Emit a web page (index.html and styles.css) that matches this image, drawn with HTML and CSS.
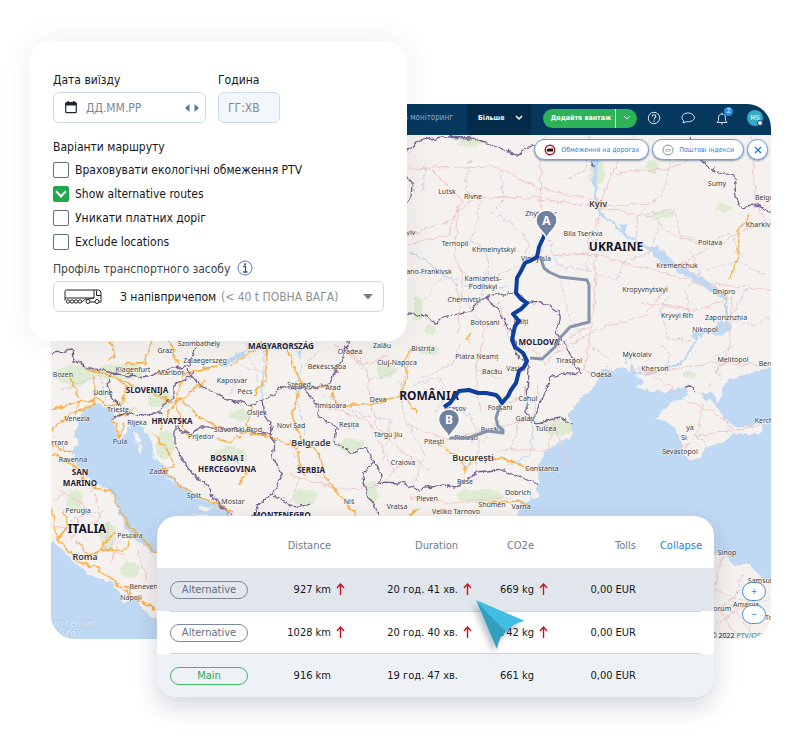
FILE: index.html
```html
<!DOCTYPE html>
<html lang="uk">
	<head>
		<meta charset="utf-8">
		<meta name="viewport" content="width=device-width, initial-scale=1">
		<title>Маршрут</title>
		<link rel="stylesheet" href="styles.css">
	</head>
	<body>
		<main class="stage">

			<section class="map-panel">
				<header class="topbar">
					<a class="nav-link" href="#">GPS моніторинг</a>
					<button class="nav-more" type="button">Більше
						<svg width="8" height="6" viewBox="0 0 8 6"><path d="M1 1l3 3 3-3" fill="none" stroke="#fff" stroke-width="1.5"/></svg>
					</button>
					<div class="add-group">
						<button class="add-main" type="button">Додайте вантаж</button>
						<button class="add-more" type="button" aria-label="Ще">
							<svg width="8" height="6" viewBox="0 0 8 6"><path d="M1 1l3 3 3-3" fill="none" stroke="#fff"/></svg>
						</button>
					</div>
					<button class="icon-btn" type="button" aria-label="Довідка">
						<svg width="14" height="14" viewBox="0 0 14 14" fill="none" stroke="#d5e3ee"><circle cx="7" cy="7" r="5.7"/><path d="M5.2 5.5c0-2.4 3.7-2.2 3.6 0C8.8 6.9 7 6.8 7 8.5M7 9.6v1.2" stroke-width="1.1"/></svg>
					</button>
					<button class="icon-btn" type="button" aria-label="Чат">
						<svg width="14" height="14" viewBox="0 0 14 14" fill="none" stroke="#d5e3ee"><path d="M2.800 9.800C-1 7 1.500 2 7 2s8.500 5 4.500 7.500C10 10.600 7.500 11 5.600 10.700L2 12z"/></svg>
					</button>
					<button class="icon-btn bell" type="button" aria-label="Сповіщення">
						<svg width="14" height="14" viewBox="0 0 14 14" fill="none" stroke="#d5e3ee"><path d="M2 11.500h10L10.500 9.500V6.500c0-4.600-7-4.600-7 0v3zM6 12.500c.5.8 1.500.8 2 0M7 3V1.500"/></svg>
						<span class="count">2</span>
					</button>
					<button class="avatar" type="button">MS<span class="status"></span></button>
				</header>

				<div class="map">
					<svg class="map-art" viewBox="51 135 720 504" preserveAspectRatio="xMidYMid slice">
						<defs>
							<filter id="rough" filterUnits="userSpaceOnUse" x="40" y="125" width="745" height="525" color-interpolation-filters="sRGB">
								<feTurbulence type="fractalNoise" baseFrequency="0.13" numOctaves="3" seed="4"/>
								<feDisplacementMap in="SourceGraphic" scale="7" xChannelSelector="R" yChannelSelector="G"/>
							</filter>
						</defs>
						<rect x="51" y="135" width="720" height="504" fill="#f5f1ee"/>

						<!-- forests -->
						<g class="green" filter="url(#rough)">
							<ellipse cx="597" cy="172" rx="8" ry="12"/>
							<ellipse cx="418" cy="308" rx="5" ry="12"/>
							<ellipse cx="430" cy="330" rx="6" ry="5"/>
							<ellipse cx="690" cy="375" rx="6" ry="3"/>
							<ellipse cx="663" cy="215" rx="12" ry="3"/>
							<ellipse cx="724" cy="208" rx="8" ry="4"/>
							<ellipse cx="652" cy="166" rx="6" ry="6"/>
							<ellipse cx="558" cy="428" rx="14" ry="8"/>
							<ellipse cx="480" cy="496" rx="24" ry="7"/>
							<ellipse cx="386" cy="370" rx="10" ry="8"/>
							<ellipse cx="350" cy="445" rx="14" ry="7"/>
							<ellipse cx="372" cy="492" rx="6" ry="12"/>
							<ellipse cx="165" cy="445" rx="9" ry="15"/>
							<ellipse cx="240" cy="415" rx="11" ry="5"/>
							<ellipse cx="230" cy="455" rx="16" ry="9"/>
							<ellipse cx="305" cy="497" rx="12" ry="8"/>
							<ellipse cx="120" cy="372" rx="26" ry="8"/>
							<ellipse cx="75" cy="375" rx="20" ry="10"/>
							<ellipse cx="160" cy="400" rx="12" ry="8"/>
							<ellipse cx="108" cy="535" rx="8" ry="14"/>
							<ellipse cx="75" cy="500" rx="8" ry="10"/>
							<ellipse cx="130" cy="570" rx="10" ry="8"/>
							<ellipse cx="470" cy="142" rx="14" ry="5"/>
							<ellipse cx="430" cy="350" rx="10" ry="5"/>
						</g>

						<!-- seas, lakes and rivers -->
						<g class="sea" filter="url(#rough)">
							<path d="M100 403L84 410 80 416 75 430 78 445 73 451 77 465 87 477 107 489 116 501 121 517 131 537 157 555 170 600 300 600 230 515 213 503 200 497 183 488 172 478 163 467 155 456 150 440 143 429 135 421 130 425 127 435 120 439 115 428 113 418 113 411z"/>
							<path d="M40 536L52 540 63 550 77 565 93 577 110 582 120 590 122 602 137 600 143 610 150 617 160 624 170 660H40z"/>
							<path d="M515 525L518 510 522 502 537 497 539 485 538 468 547 448 560 443 570 438 572 423 567 415 573 407 583 395 590 393 597 379 603 369 613 370 623 367 629 374 632 362 637 372 645 373 634 375 645 380 637 387 650 392 670 391 685 388 688 395 673 402 653 418 667 423 677 431 682 442 680 451 690 460 700 458 707 447 723 442 733 433 750 436 762 432 764 423 785 424V590L771 583 758 575 750 565 733 565 723 553 714 557 690 580H515z"/>
							<path d="M785 363L753 372 737 378 728 380 723 389 720 402 714 398 712 390 708 396 698 392 703 400 712 400 720 409 723 419 737 426 750 426 760 419 785 420z"/>
						</g>
						<g class="island" filter="url(#rough)">
							<path d="M133 431l5 3 3 8-4 1zM138 444l4 3 1 8-3-2zM150 450l7 9-2 1zM163 475l12 8-3 1zM196 506l18 2-8 3zM188 515l20-1-4 3z"/>
						</g>
						<g class="sea" filter="url(#rough)">
							<path d="M643 244L654 248 659 244 663 252 672 260 684 267 713 285 727 296 722 298 704 287 680 272 662 263z"/>
							<path d="M592 150l6 2-1 40-4-2zM620 223l6 1v11l-4 1zM692 332l12 1 15-9 8-6 5 10-9 8-14-3-16 7z"/>
							<path d="M220 364l20-12 7-2-5 7-21 10z"/>
						</g>
						<g class="river" filter="url(#rough)">
							<path stroke-width="2" d="M595 190l3 22 15 10 10 12 22 14M713 288l12 9 3 25M697 338l-6 12-10 13-18 6-18 5"/>
							<path d="M407 250l15 8 20 17 25 10 40 2M298 341l4 30-6 15 8 50M265 341l-4 60M625 365l6-14M539 385l-6 30-2 40-25 10"/>
						</g>

						<!-- regional boundaries -->
						<g class="region" filter="url(#rough)">
							<path d="M470 160l-5 30 15 10-3 20-7 22 15 6 5 28-10 22M500 165l4 35-12 12 20 12 18 20-10 25M425 300l12-18 15-5 8 22M425 162l-3 30M547 235l10 30 30 6M590 135l-5 35-20 10M600 215l-12 25-2 30 30 10 10-20 25-8 8-35M670 162l-6 30-25 22-4 25 20 16M640 215l35-5 5 25 30 8 20-10 12 25M690 250l10 25-15 16 5 20M705 270l30-8 30 12M745 290l-15 30 25 5 15-8M670 295l-10 15 8 28 22 3M660 345l10 10-5 20M560 280l10 40 20 25 20 15M735 345l-20 12 5 22M460 345l-8 20-30 12M480 350l-3 20 25 10 15-12M412 385l28-8 5 20-10 15M440 400l30 15 10 25-5 25M500 420l-20 25M520 420l-10 30M400 380l5 40 20 35-10 25M350 350l20 30 25-8M322 395l40 20 30 5-10 40M290 440l10 30 30 10M300 480l-15 35M230 360l35 15M240 375l-10 20M245 342l15 40M320 350l-20 20M60 390l40-15 5 25M52 435l20 20 5 30-25 15M70 520l35-10M110 545l20-20M715 590l25 10 30 0M742 575l-10 30 20 30"/>
						</g>

						<!-- main roads -->
						<g class="road" filter="url(#rough)">
							<path d="M407 169l85-3 50 23 60 12M407 235l40-13 28-25 57 1 70 9 47-4M545 135l-5 30 2 80-5 10-38 20M599 204l18-40 20-35M615 174l55-6 20-8M602 209l50 8 20 18 30 8M407 245l40-10 15-35-30-30M459 205l-4 50 8 20-5 60M537 257l50-4 60 15 50 15 74 6M680 265l25-15 35-18 25-10M770 230l-15-30-3-65M732 290l-3 60-20 35M640 302l60 8 30-12M667 285l-20 30-47 13-45 25M601 205l-5 35-2 65-10 65 13 5 12-12M590 325l-30 20-15 20-10-15-25-8-10-40M480 410l-5-40 10-40-20-30M407 425l40 15 53-15 35-5 20 10 15 40M500 407l25-12 5-32M555 420l-8 30-50 0M510 497l-60 6-40-5M630 367l20 5 60-9 60 2M642 370l27 15 12 13 33 15 22 17 35-9M704 403l-8 33 40-6M696 436l-12 12-3-5M696 436l12 12M350 350l15 15 10 60 25 25 30 20M335 345l30 20 25-10M322 405l45 15 30 55M400 465l-20 20-35 5-55-15M412 350l-10 35 7 20M60 490l25 15-10 25-23-5M90 485l10 30-18 20M70 540l10-22M110 520l-5 30 20 5M120 540l-10 25M137 550l10 30M723 555l-8 30M740 590l-20 20 15 25M758 590l-10 40M715 625l50-35"/>
						</g>
						<g class="motorway" filter="url(#rough)">
							<path d="M52 410l28-8 20-3 10 7 12-2 4-18-15-10M52 430l20-18 23-7 0-30M75 415l5-15-10-25M52 446l21 6M52 454l22 10 16 22 22 6 15 30 30 32M52 510l5 28 20 24 20 5 35 30 25 12M58 540l10-15-5-15M75 540l15 15 10-5 15-18M103 548l20 3 10-18M125 585l10 15 15 4M112 415l8 22 5-15M115 410l10 6 10-8M150 342l-5 20-20 2M170 342l5 15 8 18-8 28-35-15-30-12-25-8M110 341l5 15-7 5M183 375l20-5 18-5M155 435l15 20 5 10-13 5 25 20 45 22M160 430l10-20 10-12 20 20 30 13 38 5 30 12M205 380l-30 25 12 30M230 366l30-20 5-15M268 345l-3 35-12 16M252 405l-5 20 8 8M284 342l8 20 9 22-9 30 10 28 16 10 7 25 12 15 15 18 10 10M298 451l2 15 5 10M301 387h30l5 18 22 0 40-8 10-20-5-18 10-10M240 435l-12 8-10-5M240 485l5-15-10-8M407 400l10 12M435 443l25 15 5 14 5-10M470 459h30l20 5 12 6M410 515l8-6M488 503l30-2 15 5M730 278l7-15 2-18-1-15 13-14M470 342l-5-4 8-4"/>
						</g>

						<!-- state borders -->
						<g class="border" filter="url(#rough)">
							<path d="M407 152l13-12 23-3 27 1 17 4 13 8 17 5 16-10 20-3M603 137l-8 13-5 12 5 4M690 137l12 23 8 8 23 7 2 22 8 11 14-3 14 8M407 177l6 6-1 14-5 8"/>
							<path d="M407 313l15 2 15 8 6-6 27-5 7-10 10-5 28-5 12 10 16 1 17 10-3 20 10 15 13 27-17-2-13 4-7 21-10 20 4 6 23-6 12 7M487 297l13 16 12 20 4 20 12 12-1 47 6 11"/>
							<path d="M378 482l22 1 20 6 23-4 12 2 22-14 26-3 17 7 19 8M303 388l14 17 3 12 17 10-2 16 18 10 14-5 5 10 10 17-4 7M375 462l-10 8-2 10 4 15 13 20M352 335l-4 7-8 20-10 20-15 6-15-1-17 1-20 12-13 5-30-8-23-15-12-13"/>
							<path d="M263 400l2 15 8 12-3 8 5 7-2 16 10 17-10 17-16 13-4 12M273 495l22 12 15-3M270 435l-17-3-36-5-17 0-8 8-17-8v18l12 23 20 17 10 17 13 13M52 353l20-3 1 10 17 8 23 5 27 5 33-10 15-2 7-18M113 373l-6 12 6 13 7 9M113 417l17-4 10 3 12-3 10 0 1-10 10-6v-12l24-12M685 387l6-1 6 5"/>
						</g>

						<g class="label">
							<text x="447" y="194">Lutsk</text><text x="473" y="199">Rivne</text>
							<text x="541" y="216">Zhytomyr</text><text x="409" y="235">Lviv</text>
							<text x="455" y="246">Ternopil</text><text x="494" y="252">Khmelnytskyi</text>
							<text x="583" y="236">Bila Tserkva</text><text x="536" y="261">Vinnytsia</text>
							<text x="426" y="274">Ivano-Frankivsk</text><text x="483" y="281">Kamianets-</text>
							<text x="483" y="289">Podilskyi</text><text x="464" y="302">Chernivtsi</text>
							<text x="485" y="325">Botoșani</text><text x="521" y="324">Bălți</text>
							<text x="423" y="351">Bistrița</text><text x="477" y="359">Piatra Neamț</text>
							<text x="492" y="374">Bacău</text><text x="516" y="371">Vaslui</text>
							<text x="569" y="363">Tiraspol</text><text x="528" y="401">Cahul</text>
							<text x="500" y="410">Focșani</text><text x="525" y="421">Galați</text>
							<text x="546" y="431">Tulcea</text><text x="491" y="432">Buzău</text>
							<text x="466" y="440">Ploiești</text><text x="434" y="444">Pitești</text>
							<text x="455" y="411">Brașov</text><text x="542" y="471">Constanța</text>
							<text x="465" y="484">Ruse</text><text x="518" y="495">Dobrich</text>
							<text x="427" y="501">Pleven</text><text x="492" y="507">Shumen</text>
							<text x="521" y="509">Varna</text><text x="456" y="514">Veliko Tarnovo</text>
							<text x="397" y="509">Vratsa</text><text x="717" y="186">Sumy</text>
							<text x="770" y="200">Belgorod</text><text x="758" y="227">Kharkiv</text>
							<text x="710" y="245">Poltava</text><text x="677" y="268">Kremenchuk</text>
							<text x="645" y="292">Kropyvnytskyi</text><text x="724" y="294">Dnipro</text>
							<text x="677" y="318">Kryvyi Rih</text><text x="726" y="320">Zaporizhzhia</text>
							<text x="705" y="332">Nikopol</text><text x="637" y="357">Mykolaiv</text>
							<text x="655" y="371">Kherson</text><text x="601" y="377">Odesa</text>
							<text x="733" y="362">Melitopol</text><text x="775" y="366">Berdiansk</text>
							<text x="764" y="423">Kerch</text><text x="690" y="430">ya</text>
							<text x="684" y="440">Si</text><text x="680" y="454">Sevastopol</text>
							<text x="350" y="354">Oradea</text><text x="382" y="348">Zalău</text>
							<text x="397" y="365">Cluj-Napoca</text><text x="327" y="369">Békéscsaba</text>
							<text x="299" y="387">Szeged</text><text x="333" y="390">Arad</text>
							<text x="378" y="402">Deva</text><text x="330" y="408">Timișoara</text>
							<text x="349" y="427">Reșița</text><text x="388" y="437">Târgu Jiu</text>
							<text x="403" y="465">Craiova</text><text x="291" y="428">Novi Sad</text>
							<text x="232" y="383">Kaposvár</text><text x="245" y="394">Pécs</text>
							<text x="257" y="415">Osijek</text><text x="238" y="432">Slavonski Brod</text>
							<text x="233" y="504">Mostar</text><text x="349" y="504">Niš</text>
							<text x="165" y="353">Graz</text><text x="199" y="346">Szombathely</text>
							<text x="205" y="363">Zalaegerszeg</text><text x="133" y="372">Klagenfurt</text>
							<text x="171" y="375">Maribor</text><text x="63" y="377">Bozen</text>
							<text x="103" y="395">Udine</text><text x="118" y="412">Trieste</text>
							<text x="77" y="421">Venezia</text><text x="137" y="425">Rijeka</text>
							<text x="120" y="444">Pula</text><text x="56" y="445">Ferrara</text>
							<text x="73" y="462">Ravenna</text><text x="159" y="474">Zadar</text>
							<text x="194" y="498">Split</text><text x="201" y="439">Prijedor</text>
							<text x="78" y="513">Perugia</text><text x="130" y="538">Pescara</text>
							<text x="147" y="589">Benevento</text><text x="131" y="600">Napoli</text>
							<text x="727" y="555">Sinop</text><text x="761" y="583">Samsun</text>
							<text x="746" y="607">Amasya</text><text x="720" y="611">Çorum</text>
							<text x="774" y="620">Tokat</text>
						</g>
						<g class="label capital">
							<text x="598" y="207">Kyiv</text><text x="473" y="461">București</text>
							<text x="311" y="446">Belgrade</text><text x="85" y="560">Roma</text>
						</g>
						<g class="label country">
							<text x="539" y="345">MOLDOVA</text><text x="281" y="349">MAGYARORSZÁG</text>
							<text x="147" y="393">SLOVENIJA</text><text x="172" y="424">HRVATSKA</text>
							<text x="227" y="461">BOSNA I</text><text x="227" y="472">HERCEGOVINA</text>
							<text x="311" y="473">SERBIA</text><text x="282" y="518">MONTENEGRO</text>
							<text x="80" y="475">SAN</text><text x="80" y="486">MARINO</text>
						</g>
						<g class="label big">
							<text x="616" y="251">UKRAINE</text><text x="429" y="400">ROMÂNIA</text>
							<text x="87" y="533">ITALIA</text>
						</g>
						<g class="label water">
							<text x="95" y="627">Tyrrhenian</text><text x="76" y="637">Sea</text>
						</g>

						<!-- routes -->
						<g fill="none" stroke-linejoin="round">
							<path stroke="#8593ad" stroke-width="3" d="M540 256l4 12 5 4 11 5 27 3 2 5v37l-19 5-10 11-5 9-13 12-12-1M500 405l-4 13 2 8 5 4v3l-15-2-20 7h-19"/>
							<path stroke="#0c3f9f" stroke-width="4" d="M545 234l-6 13-2 10-7 4-5 2-4 8-4 7-1 15 5 6 6 4-6 6-8 5 6 7-4 5-3 14 3 7 8 6 4 8-3 6-5 4-3 12-5 7-3 6-6 7-3-5-3-3-10-2-8 0-9-3-10 1-9 12-6 4"/>
						</g>
						<g id="pin-a">
							<path d="M546.500 238C543 231 536 228 536 220.500a10.500 10.500 0 0 1 21 0C557 228 550 231 546.500 238z" fill="#70819f" stroke="#fff" stroke-width="1.500"/>
							<text class="pin" x="546.500" y="225">A</text>
						</g>
						<g id="pin-b">
							<path d="M449 437C445.500 430 438.500 427 438.500 419.500a10.500 10.500 0 0 1 21 0C459.500 427 452.500 430 449 437z" fill="#70819f" stroke="#fff" stroke-width="1.500"/>
							<text class="pin" x="449" y="424">B</text>
						</g>
					</svg>

					<div class="chips">
						<button class="chip" type="button">
							<svg width="12" height="12" viewBox="0 0 12 12"><circle cx="6" cy="6" r="4.700" fill="#fff" stroke="#b3121d" stroke-width="1.500"/><path d="M3 7.500V5.500l1.500-1h4.500v3z" fill="#111"/></svg>
							Обмеження на дорогах
						</button>
						<button class="chip" type="button">
							<svg width="12" height="12" viewBox="0 0 12 12"><circle cx="6" cy="6" r="5" fill="#fff" stroke="#8a8f94"/><text x="6" y="8" class="zip">ZIP</text></svg>
							Поштові індекси
						</button>
						<button class="chip close" type="button" aria-label="Закрити">
							<svg width="8" height="8" viewBox="0 0 8 8"><path d="M1 1l6 6M7 1L1 7" stroke="#1a73d9" stroke-width="1.200"/></svg>
						</button>
					</div>
					<div class="zoom">
						<button type="button">+</button>
						<button type="button">−</button>
					</div>
					<p class="credits">© 2022 <a href="#">PTV/OSM</a></p>
				</div>
			</section>

			<form class="form-card">
				<div class="when">
					<div>
						<label for="date">Дата виїзду</label>
						<div class="field">
							<svg width="12" height="13" viewBox="0 0 12 13"><rect x=".7" y="1.700" width="10.600" height="10" rx="1" fill="none" stroke="#1b2430" stroke-width="1.200"/><path d="M.7 2h10.600v2.500H.7zM2.500 0h1.500v2H2.500zM8 0h1.500v2H8z" fill="#1b2430"/></svg>
							<input id="date" type="text" placeholder="ДД.ММ.РР">
							<svg width="14" height="8" viewBox="0 0 14 8"><path d="M4.500 0v8L0 4zM9.500 0v8L14 4z" fill="#5d7896"/></svg>
						</div>
					</div>
					<div>
						<label for="time">Година</label>
						<div class="field time">
							<input id="time" type="text" placeholder="ГГ:ХВ">
						</div>
					</div>
				</div>

				<fieldset>
					<legend>Варіанти маршруту</legend>
					<label class="check"><input type="checkbox">Враховувати екологічні обмеження PTV</label>
					<label class="check"><input type="checkbox" checked>Show alternative routes</label>
					<label class="check"><input type="checkbox">Уникати платних доріг</label>
					<label class="check"><input type="checkbox">Exclude locations</label>
				</fieldset>

				<div class="profile-head">
					<label for="profile">Профіль транспортного засобу</label>
					<svg width="16" height="16" viewBox="0 0 16 16"><circle cx="8" cy="8" r="7" fill="none" stroke="#5b78b5"/><path d="M6.200 6.500h2.300V12M6 12h4.500" fill="none" stroke="#3c5584" stroke-width="1.300"/><circle cx="8" cy="4.200" r="1" fill="#3c5584"/></svg>
				</div>
				<div class="field profile">
					<svg width="38" height="16" viewBox="0 0 38 16" fill="none" stroke="#222"><path d="M1 11.500V2.500Q1 1 2.500 1H30v8H1M30 1h4.500Q37 1 37 4.500V13H22.500V10.500L30 9M18 13l4.500-4M32.500 1.500v5H37"/><g fill="#fff"><circle cx="4" cy="12.500" r="1.700"/><circle cx="8" cy="12.500" r="1.700"/><circle cx="12" cy="12.500" r="1.700"/><circle cx="16" cy="12.500" r="1.700"/><circle cx="24" cy="12.500" r="2"/><circle cx="33" cy="12.500" r="2"/></g></svg>
					<select id="profile"><option>З напівпричепом</option></select>
					<span class="hint">(&lt; 40 t ПОВНА ВАГА)</span>
					<svg width="10" height="6" viewBox="0 0 10 6"><path d="M0 0h10L5 5.500z" fill="#7b7f84"/></svg>
				</div>
			</form>

			<section class="results">
				<table>
					<colgroup>
						<col class="c-type"><col class="c-dist"><col class="c-dur"><col class="c-co"><col class="c-toll"><col>
					</colgroup>
					<thead>
						<tr>
							<th></th><th>Distance</th><th>Duration</th><th>CO2e</th><th>Tolls</th>
							<th class="end"><button class="collapse" type="button">Collapse</button></th>
						</tr>
					</thead>
					<tbody>
						<tr class="active">
							<td class="type"><span class="pill">Alternative</span></td>
							<td>927 km<svg class="up" viewBox="0 0 9 12"><path d="M4.500 12V1M1 5l3.500-4L8 5"/></svg></td>
							<td>20 год. 41 хв.<svg class="up" viewBox="0 0 9 12"><path d="M4.500 12V1M1 5l3.500-4L8 5"/></svg></td>
							<td>669 kg<svg class="up" viewBox="0 0 9 12"><path d="M4.500 12V1M1 5l3.500-4L8 5"/></svg></td>
							<td>0,00 EUR</td><td></td>
						</tr>
						<tr class="lined">
							<td class="type"><span class="pill">Alternative</span></td>
							<td>1028 km<svg class="up" viewBox="0 0 9 12"><path d="M4.500 12V1M1 5l3.500-4L8 5"/></svg></td>
							<td>20 год. 40 хв.<svg class="up" viewBox="0 0 9 12"><path d="M4.500 12V1M1 5l3.500-4L8 5"/></svg></td>
							<td>742 kg<svg class="up" viewBox="0 0 9 12"><path d="M4.500 12V1M1 5l3.500-4L8 5"/></svg></td>
							<td>0,00 EUR</td><td></td>
						</tr>
						<tr class="best">
							<td class="type"><span class="pill main">Main</span></td>
							<td>916 km</td><td>19 год. 47 хв.</td><td>661 kg</td><td>0,00 EUR</td><td></td>
						</tr>
					</tbody>
				</table>
				<svg class="pointer" width="50" height="50" viewBox="0 0 50 50">
					<path d="M0 0L30 32Q23 36 21 49z" fill="#309fc0"/>
					<path d="M0 0L49 21Q37 23 30 32z" fill="#3fbde2"/>
				</svg>
			</section>

		</main>
	</body>
</html>
```

FILE: styles.css
```css
* { box-sizing: border-box; }

body {
	margin: 0;
	background: #fff;
	color: #14181d;
	font: 12px/16px "DejaVu Sans Condensed", "DejaVu Sans", sans-serif;
}

button, input, select { font: inherit; color: inherit; }
button { border: 0; padding: 0; background: none; cursor: pointer; }
svg { display: block; flex: none; }

/* the two cards overlap the map panel */
.stage {
	display: grid;
	grid-template-columns: 21px 106px 250px minmax(0, 1fr) 57px;
	grid-template-rows: 63px auto 175px 123px auto;
	padding: 41px 29px 53px 30px;
}

.map-panel {
	grid-area: 2 / 2 / 5 / 6;
	display: flex;
	flex-direction: column;
	border-radius: 0 24px 24px 24px;
	overflow: hidden;
}

/* top bar */
.topbar {
	display: flex;
	align-items: center;
	justify-content: flex-end;
	height: 31px;
	padding-right: 8px;
	background: #05385c;
	font-size: 8px;
}
.nav-link { margin: 0 14px 3px 0; color: #8fabc0; text-decoration: none; }
.nav-more {
	display: flex;
	align-items: center;
	justify-content: space-between;
	align-self: stretch;
	width: 64px;
	padding: 0 8px 3px 11px;
	background: #052b4b;
	color: #fff;
	font-size: 7px;
	font-weight: bold;
}
.add-group {
	display: flex;
	width: 94px;
	height: 19px;
	margin: 0 10px 3px 12px;
	border-radius: 10px;
	background: #2db257;
	color: #fff;
	font-size: 7px;
}
.add-main { flex: 1; padding-left: 4px; font-weight: bold; white-space: nowrap; }
.add-more { display: flex; align-items: center; justify-content: center; width: 22px; border-left: 1px solid #e3f5e9; }
.icon-btn { position: relative; margin: 0 20px 3px 0; }
.icon-btn.bell { margin-right: 18px; }
.count {
	position: absolute;
	top: -4px;
	right: -4px;
	width: 9px;
	border-radius: 5px;
	background: #2d8cf0;
	color: #fff;
	font-size: 7px;
	line-height: 9px;
}
.avatar {
	position: relative;
	width: 16px;
	height: 16px;
	margin-bottom: 3px;
	border-radius: 50%;
	background: #35a9c4;
	color: #fff;
	font-size: 7px;
	line-height: 16px;
}
.status {
	position: absolute;
	right: 0;
	bottom: 0;
	width: 6px;
	height: 6px;
	border: 1px solid #05385c;
	border-radius: 50%;
	background: #fff;
}

/* map */
.map { position: relative; flex: 1; overflow: hidden; }
.map-art { position: absolute; width: 100%; height: 100%; }
.green { fill: #dfead2; }
.sea { fill: #bfd8f3; }
.island { fill: #f5f1ee; }
.river { fill: none; stroke: #b9d5ee; }
.region { fill: none; stroke: #d5cfdb; stroke-width: 1; stroke-dasharray: 4 1; }
.road { fill: none; stroke: #efc6c8; stroke-width: 1; }
.motorway { fill: none; stroke: #f7ae45; stroke-width: 1.4; }
.border { fill: none; stroke: #75628f; stroke-width: 1.3; }
.label {
	fill: #3a3a3c;
	stroke: #fff;
	stroke-opacity: .7;
	stroke-width: 1;
	paint-order: stroke;
	font: 7px "Noto Sans", "Open Sans", sans-serif;
	text-anchor: middle;
}
.capital { font-size: 9px; font-weight: 600; }
.country { fill: #22203a; font-size: 8px; font-weight: bold; }
.big { fill: #17152b; font-size: 12px; font-weight: bold; }
.water { fill: #e3effb; stroke: #9dbbe0; font-size: 10px; font-style: italic; text-anchor: end; }
.pin { fill: #fff; font: bold 12px "Noto Sans", sans-serif; text-anchor: middle; }

.chips {
	position: absolute;
	top: 4px;
	right: 3px;
	display: flex;
	gap: 3px;
}
.chip {
	display: flex;
	align-items: center;
	gap: 5px;
	height: 21px;
	padding: 0 9px;
	border: 1px solid #6f9fd2;
	border-radius: 11px;
	background: #fff;
	box-shadow: 0 1px 2px rgba(30, 70, 120, .5);
	color: #2c7bd2;
	font-size: 7px;
	white-space: nowrap;
}
.chip.close { width: 21px; padding: 0; justify-content: center; }
.zip { fill: #777; font-size: 4px; text-anchor: middle; }

.zoom {
	position: absolute;
	right: 5px;
	bottom: 15px;
	display: grid;
	gap: 4px;
}
.zoom button {
	width: 24px;
	height: 19px;
	border: 1px solid #4a90d9;
	border-radius: 10px;
	background: #fff;
	color: #2c7bd2;
	font-size: 8px;
	line-height: 16px;
}
.credits {
	position: absolute;
	right: 4px;
	bottom: -1px;
	margin: 0;
	font: 7px/8px "Noto Sans", sans-serif;
}
.credits a { color: #1677b8; text-decoration: none; }

/* route form */
.form-card {
	grid-area: 1 / 1 / 3 / 4;
	z-index: 1;
	padding: 31px 23px 29px;
	border-radius: 20px;
	background: #fff;
	box-shadow: 0 0 30px rgba(20, 40, 70, .08);
}
.when { display: flex; gap: 12px; }
.when label { display: block; margin-bottom: 4px; }
.field {
	display: flex;
	align-items: center;
	width: 153px;
	height: 31px;
	padding: 0 6px 0 11px;
	border: 1px solid #ccdbe7;
	border-radius: 6px;
	background: #fff;
}
.field input {
	flex: 1;
	min-width: 0;
	padding: 0 0 0 9px;
	border: 0;
	background: none;
	outline: none;
}
.field input::placeholder { color: #7c8794; opacity: 1; }
.field.time { width: 62px; padding: 0; background: #f3f6fa; }

fieldset { margin: 16px 0 0; padding: 0; border: 0; }
legend { padding: 0; margin-bottom: 3px; }
.check { display: flex; align-items: center; gap: 6px; height: 23px; }
.check + .check { margin-top: 1px; }
.check input {
	appearance: none;
	width: 16px;
	height: 16px;
	margin: 0;
	border: 1px solid #626f80;
	border-radius: 2px;
	background: #fff;
}
.check input:checked {
	border-color: #20a84c;
	background: #20a84c;
	display: grid;
	place-items: center;
}
.check input:checked::before {
	content: "";
	width: 6px;
	height: 6px;
	margin-top: -3px;
	border: solid #fff;
	border-width: 0 2px 2px 0;
	transform: rotate(45deg);
}

.profile-head { display: flex; gap: 7px; margin: 7px 0 4px; color: #3c444d; }
.profile-head label { padding-top: 1px; }
.field.profile { width: auto; padding: 0 10px; }
.profile select {
	margin-left: 18px;
	padding: 0;
	border: 0;
	background: none;
	appearance: none;
	outline: none;
}
.hint { flex: 1; margin-left: 4px; color: #8b8f94; }

/* results */
.results {
	position: relative;
	grid-area: 4 / 3 / 6 / 5;
	z-index: 1;
	border-radius: 20px;
	background: #fff;
	box-shadow: 0 10px 24px rgba(20, 35, 60, .18);
	font-size: 11px;
}
table { width: 100%; border-collapse: collapse; table-layout: fixed; }
.c-type { width: 94px; }
.c-dist { width: 100px; }
.c-dur { width: 127px; }
.c-co { width: 76px; }
.c-toll { width: 102px; }
th { height: 52px; padding: 8px 20px 0 0; color: #6f7c8c; font-weight: normal; text-align: right; }
th.end { padding-right: 12px; }
td { height: 43px; padding: 0 20px 0 0; text-align: right; white-space: nowrap; }
td.type { padding: 0 0 0 13px; text-align: left; }
.collapse { color: #1f7ee0; }
.active { background: #e0e6ec; }
/* thin rules stop short of the card's edges */
.lined {
	background:
		linear-gradient(#cbd9e4, #cbd9e4) 50% 0 / calc(100% - 26px) 1px no-repeat,
		linear-gradient(#cbd9e4, #cbd9e4) 50% 100% / calc(100% - 26px) 1px no-repeat;
}
.best td { background: #eef2f7; }
.best td:first-child { border-bottom-left-radius: 20px; }
.best td:last-child { border-bottom-right-radius: 20px; }
.pill {
	display: block;
	width: 78px;
	border: 1px solid #7d8899;
	border-radius: 9px;
	color: #5f6e82;
	text-align: center;
}
.pill.main { border-color: #3fb867; color: #27ab55; }
.up {
	display: inline-block;
	width: 9px;
	height: 12px;
	margin: 0 -14px 0 5px;
	vertical-align: -2px;
	fill: none;
	stroke: #c8141e;
	stroke-width: 1.4;
}
.pointer {
	position: absolute;
	left: 319px;
	top: 84px;
	filter: drop-shadow(-3px 5px 3px rgba(30, 50, 80, .3));
}
```
